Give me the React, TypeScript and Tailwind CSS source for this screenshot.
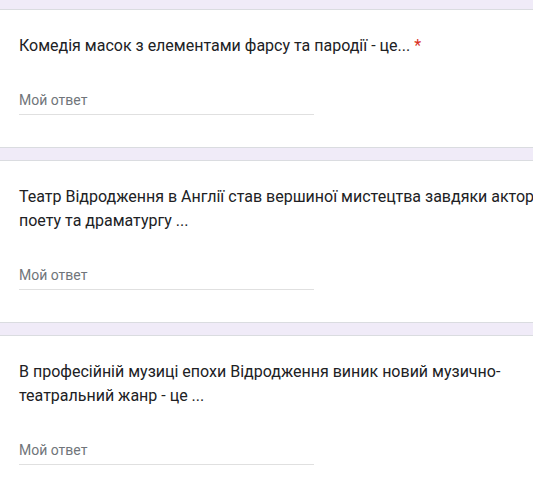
import React from 'react';

interface Question {
  title: string;
  required?: boolean;
}

const questions: Question[] = [
  { title: 'Комедія масок з елементами фарсу та пародії - це...', required: true },
  { title: 'Театр Відродження в Англії став вершиної мистецтва завдяки актору, поету та драматургу ...' },
  { title: 'В професійній музиці епохи Відродження виник новий музично-театральний жанр - це ...' },
];

function QuestionCard({ title, required }: Question) {
  return (
    <div className="bg-white border-y border-[#dadce0] pl-[19px] pt-6 pb-8">
      <div className="w-[560px] text-[16px] leading-6 text-[#202124]">
        {title}
        {required && <span className="pl-1 text-[#d93025]">*</span>}
      </div>
      <div className="mt-8 w-[295px] border-b border-[#e0e0e0] pb-1">
        <div className="text-[14px] leading-5 text-[#70757a]">Мой ответ</div>
      </div>
    </div>
  );
}

export default function App() {
  return (
    <div
      className="min-h-screen w-full overflow-hidden bg-[#f0ebf8] pt-[9px]"
      style={{ fontFamily: 'Roboto, "Noto Sans", Arial, sans-serif' }}
    >
      <div className="flex flex-col gap-3">
        {questions.map((q) => (
          <QuestionCard key={q.title} {...q} />
        ))}
      </div>
    </div>
  );
}
